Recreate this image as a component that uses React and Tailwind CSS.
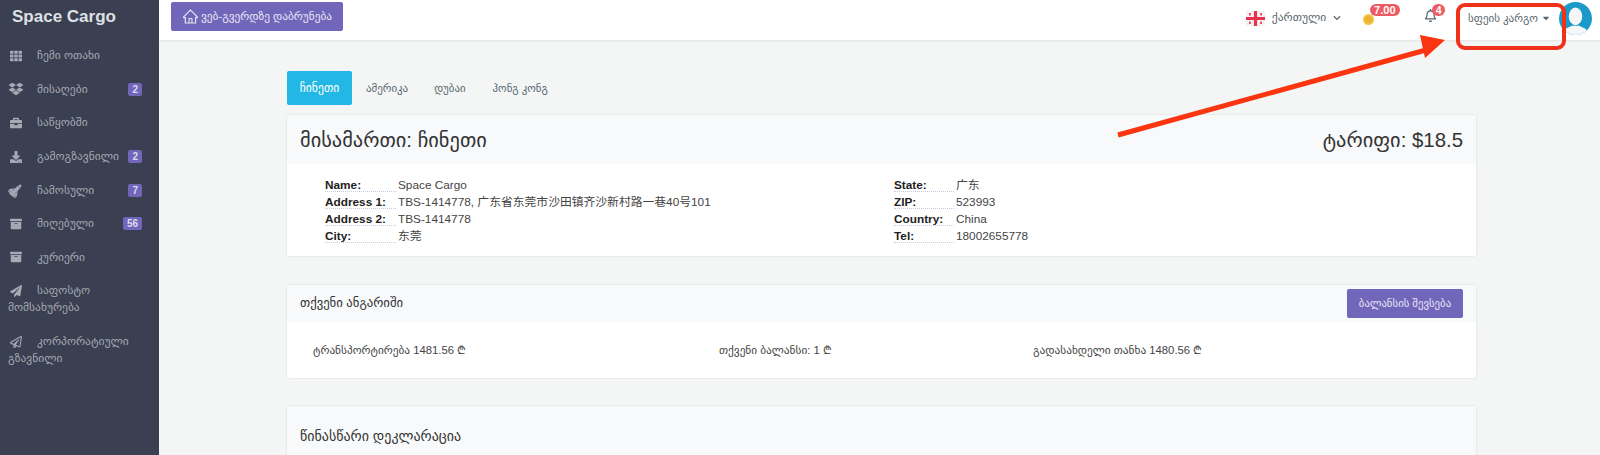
import React from "react";
import { FaTh, FaBriefcase, FaDownload, FaArchive, FaPaperPlane, FaRegPaperPlane, FaRegBell, FaChevronDown, FaCaretDown, FaSpaceShuttle, FaDropbox } from "react-icons/fa";
import { AiOutlineHome } from "react-icons/ai";

const menu = [
  { icon: FaTh, label: "ჩემი ოთახი", iconClass: "w-[12px] text-[12px]" },
  { icon: FaDropbox, label: "მისაღები", badge: 2, iconClass: "w-[12px] scale-125 text-[12px]" },
  { icon: FaBriefcase, label: "საწყობში", iconClass: "w-[12px] text-[12px]" },
  { icon: FaDownload, label: "გამოგზავნილი", badge: 2, iconClass: "w-[12px] text-[12px]" },
  { icon: FaSpaceShuttle, label: "ჩამოსული", badge: 7, iconClass: "w-[12px] scale-125 -rotate-45 text-[12px]" },
  { icon: FaArchive, label: "მიღებული", badge: 56, iconClass: "w-[12px] text-[12px]" },
  { icon: FaArchive, label: "კურიერი", iconClass: "w-[12px] text-[12px]" },
];

const addressLeft = [
  ["Name:", "Space Cargo"],
  ["Address 1:", "TBS-1414778, 广东省东莞市沙田镇齐沙新村路一巷40号101"],
  ["Address 2:", "TBS-1414778"],
  ["City:", "东莞"],
];

const addressRight = [
  ["State:", "广东"],
  ["ZIP:", "523993"],
  ["Country:", "China"],
  ["Tel:", "18002655778"],
];

function AddressList({ rows, labelWidth }) {
  return (
    <div>
      {rows.map(([label, value]) => (
        <div key={label} className="flex h-[17px] text-[11.8px] leading-[17px] text-[#444]">
          <span className={`${labelWidth} mr-[2px] h-[15px] border-b border-dotted border-[#c5cbe0] font-bold leading-[17px] text-[#222]`}>{label}</span>
          <span>{value}</span>
        </div>
      ))}
    </div>
  );
}

function App() {
  return (
    <div className="relative flex h-[455px] w-[1600px] overflow-hidden bg-[#f4f6f6] font-['Liberation_Sans','DejaVu_Sans','Noto_Sans_CJK_SC',sans-serif]">
      {/* Sidebar */}
      <aside className="w-[159px] shrink-0 bg-[#3a3f51] text-[#a6a9b3]">
        <div className="pl-3 pt-[6px] text-[17px] font-bold leading-[22px] text-[#dfe0e4]">Space Cargo</div>
        <div className="mt-[11px]">
          {menu.map(({ icon: Icon, label, badge, iconClass }) => (
            <div key={label} className="flex h-[33.6px] items-center pl-[10px] pr-[17px] text-[11.5px]">
              <Icon className={iconClass} />
              <span className="ml-[15px] flex-1 whitespace-nowrap">{label}</span>
              {badge && (
                <span className="rounded-[2px] bg-[#7266ba] px-[4px] text-[10px] font-bold leading-[13px] text-[#dcd9ef]">{badge}</span>
              )}
            </div>
          ))}
          <div className="px-2 pt-[8px] text-[11.5px] leading-[17px]">
            <FaPaperPlane className="ml-[2px] mr-[15px] inline w-[12px] text-[12px]" />
            საფოსტო მომსახურება
          </div>
          <div className="px-2 pt-[17px] text-[11.5px] leading-[17px]">
            <FaRegPaperPlane className="ml-[2px] mr-[15px] inline w-[12px] text-[12px]" />
            კორპორატიული გზავნილი
          </div>
        </div>
      </aside>

      <div className="min-w-0 flex-1">
        {/* Top bar */}
        <header className="flex h-[40px] items-start bg-white pl-[12px] pr-[8px] shadow-[0_1px_2px_rgba(0,0,0,0.08)]">
          <button className="mt-[2px] flex h-[29px] w-[172px] items-center justify-center gap-[2px] rounded-[2px] bg-[#7266ba] text-[11.3px] text-[#e8e6f5]">
            <AiOutlineHome className="text-[17px]" />
            ვებ-გვერდზე დაბრუნება
          </button>
          <div className="ml-auto flex h-[36px] items-center text-[#58666e]">
            <svg width="19" height="15" viewBox="0 0 18 15" preserveAspectRatio="none" className="mr-[7px]">
              <rect width="18" height="15" fill="#f3f3f3" />
              <rect x="7.5" width="3" height="15" fill="#e8304f" />
              <rect y="6" width="18" height="3" fill="#e8304f" />
              <rect x="3" y="2" width="1.5" height="2.5" fill="#e8304f" />
              <rect x="13.5" y="2" width="1.5" height="2.5" fill="#e8304f" />
              <rect x="3" y="10.5" width="1.5" height="2.5" fill="#e8304f" />
              <rect x="13.5" y="10.5" width="1.5" height="2.5" fill="#e8304f" />
            </svg>
            <span className="text-[11.5px]">ქართული</span>
            <FaChevronDown className="ml-[7px] text-[8px]" />
            <div className="relative ml-[22px] h-[20px] w-[16px]">
              <span className="absolute left-0 top-[6px] h-[11px] w-[11px] rounded-full border-2 border-[#f5c242] bg-[#e8b530]" />
              <span className="absolute left-[7px] top-[-4px] rounded-full bg-[#ee5a63] px-[4px] text-[11px] font-bold leading-[12px] text-white">7.00</span>
            </div>
            <div className="relative ml-[45px] h-[20px] w-[16px]">
              <FaRegBell className="absolute left-0 top-[1px] text-[13px]" />
              <span className="absolute left-[8px] top-[-4px] h-[12px] min-w-[13px] rounded-full bg-[#ee5a63] text-center text-[10.5px] font-bold leading-[12px] text-white">4</span>
            </div>
            <span className="ml-[28px] text-[11px]">სფეის კარგო</span>
            <FaCaretDown className="ml-[3px] text-[10px]" />
            <div className="ml-[8px] flex h-[33px] w-[33px] items-end justify-center overflow-hidden rounded-full bg-[#1b9ac9]">
              <svg width="27" height="29" viewBox="0 0 25 28">
                <ellipse cx="12.5" cy="10" rx="6.5" ry="8.5" fill="#f4f6f8" />
                <path d="M0 28c0-6 5-7 9-9h7c4 2 9 3 9 9z" fill="#f4f6f8" />
              </svg>
            </div>
          </div>
        </header>

        {/* Content */}
        <main className="pl-[128px] pr-[124px] pt-[31px]">
          <div className="flex h-[34px] items-center text-[10.9px] text-[#58666e]">
            <div className="flex h-[34px] w-[65px] items-center justify-center rounded-[2px] bg-[#23b7e5] text-[11.7px] text-white">ჩინეთი</div>
            <div className="pl-[14px]">ამერიკა</div>
            <div className="pl-[26px]">დუბაი</div>
            <div className="pl-[27px]">ჰონგ კონგ</div>
          </div>

          <section className="mt-[10px] overflow-hidden rounded-[2px] bg-white shadow-[0_0_2px_rgba(0,0,0,0.15)]">
            <div className="flex h-[49px] items-center justify-between bg-[#f8f9fa] px-[13px] pt-[1px] text-[20.4px] text-[#333]">
              <span>მისამართი: ჩინეთი</span>
              <span>ტარიფი: $18.5</span>
            </div>
            <div className="flex h-[92px] pl-[38px] pt-[13px]">
              <div className="w-[569px]"><AddressList rows={addressLeft} labelWidth="w-[71px]" /></div>
              <AddressList rows={addressRight} labelWidth="w-[60px]" />
            </div>
          </section>

          <section className="mt-[29px] overflow-hidden rounded-[2px] bg-white shadow-[0_0_2px_rgba(0,0,0,0.15)]">
            <div className="flex h-[37px] items-center justify-between bg-[#f8f9fa] px-[13px] text-[12.7px] text-[#333]">
              <span>თქვენი ანგარიში</span>
              <button className="h-[29px] w-[116px] rounded-[2px] bg-[#7266ba] text-[10.8px] text-[#e8e6f5]">ბალანსის შევსება</button>
            </div>
            <div className="flex h-[56px] items-center pl-[26px] text-[11.3px] text-[#444]">
              <span className="w-[406px]">ტრანსპორტირება 1481.56 ₾</span>
              <span className="w-[314px]">თქვენი ბალანსი: 1 ₾</span>
              <span>გადასახდელი თანხა 1480.56 ₾</span>
            </div>
          </section>

          <section className="mt-[28px] overflow-hidden rounded-[2px] bg-white shadow-[0_0_2px_rgba(0,0,0,0.15)]">
            <div className="flex h-[60px] items-center bg-[#f8f9fa] px-[13px] text-[14px] text-[#333]">წინასწარი დეკლარაცია</div>
          </section>
        </main>
      </div>

      {/* Annotation drawn on top of the screenshot */}
      <svg className="absolute left-0 top-0" width="1600" height="455" viewBox="0 0 1600 455" fill="none">
        <path d="M1118 135 L1426 50" stroke="#fa3510" strokeWidth="5" />
        <path d="M1445 40 L1420 35 L1425 58 Z" fill="#fa3510" />
      </svg>
      <div className="absolute left-[1456px] top-[3px] h-[47px] w-[110px] rounded-[9px] border-[4px] border-[#f0321a]" />
    </div>
  );
}

export default App;
